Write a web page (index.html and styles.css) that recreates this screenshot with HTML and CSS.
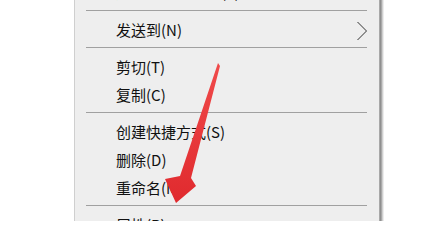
FILE: index.html
```html
<!DOCTYPE html>
<html lang="zh-CN">
<head>
<meta charset="utf-8">
<link rel="stylesheet" href="styles.css">
</head>
<body>
<div class="stage">
  <div class="menu">
    <div class="item first">还原以前的版本(V)</div>
    <div class="sep"></div>
    <div class="item has-sub">
      <span>发送到(N)</span>
      <svg class="chev" width="12" height="20" viewBox="0 0 12 20"><polyline points="1.5,1 10.5,10 1.5,19" fill="none" stroke="#333" stroke-width="1"/></svg>
    </div>
    <div class="sep"></div>
    <div class="item">剪切(T)</div>
    <div class="item">复制(C)</div>
    <div class="sep"></div>
    <div class="item">创建快捷方式(S)</div>
    <div class="item">删除(D)</div>
    <div class="item">重命名(M)</div>
    <div class="sep"></div>
    <div class="item">属性(R)</div>
  </div>
  <svg class="pointer" width="424" height="221" viewBox="0 0 424 221">
    <defs>
      <linearGradient id="rg" x1="0" y1="0" x2="0" y2="1">
        <stop offset="0" stop-color="#f04a4a"/>
        <stop offset="1" stop-color="#e02a2e"/>
      </linearGradient>
    </defs>
    <polygon points="218,63 220,66 191,178 196,186 176,203 165,179 180,176" fill="url(#rg)"/>
  </svg>
</div>
</body>
</html>
```
FILE: styles.css
```css
html, body {
  margin: 0;
  padding: 0;
  background: #ffffff;
  overflow: hidden;
}
.stage {
  position: relative;
  width: 424px;
  height: 221px;
  overflow: hidden;
}
.menu {
  margin-top: -19px;
  margin-left: 74px;
  width: 304px;
  background: #eeeeee;
  border-left: 1px solid #cfcfcf;
  border-right: 1px solid #a8a8a8;
  box-shadow: 1px 0 0 #8f8f8f, 2px 0 0 #a9a9a9, 3px 0 0 #cfcfcf, 4px 0 0 #ececec;
  font-family: "Noto Sans CJK SC", "Noto Sans", sans-serif;
  font-size: 15px;
  color: #111;
}
.item {
  height: 28px;
  line-height: 28px;
  padding-left: 41px;
  padding-right: 11px;
  white-space: nowrap;
}
.item.first {
  height: 26px;
  line-height: 22px;
}
.has-sub {
  display: flex;
  justify-content: space-between;
  align-items: center;
}
.chev {
  display: block;
  margin-top: 1px;
}
.sep {
  height: 1px;
  background: #a0a0a0;
  margin: 3px 12px 5px 11px;
}
.pointer {
  position: absolute;
  left: 0;
  top: 0;
}
```
